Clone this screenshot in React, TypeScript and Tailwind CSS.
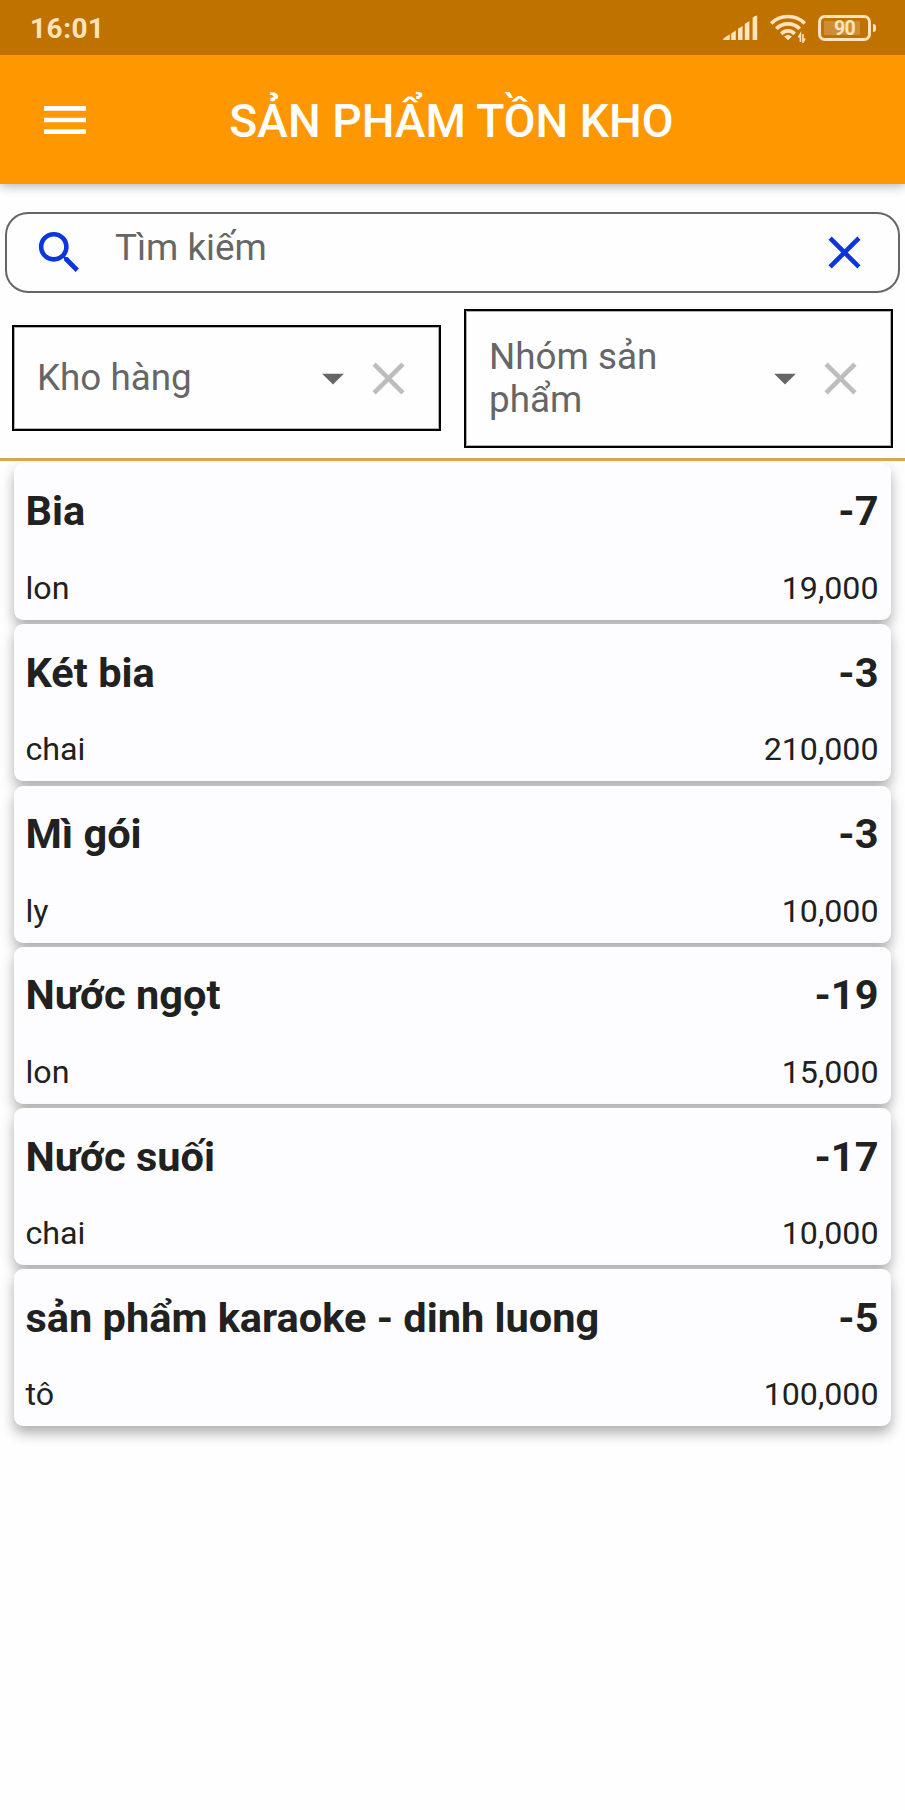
import { MdArrowDropDown, MdClose, MdMenu, MdSearch } from "react-icons/md";

type Product = { name: string; quantity: string; unit: string; price: string };

const products: Product[] = [
  { name: "Bia", quantity: "-7", unit: "lon", price: "19,000" },
  { name: "Két bia", quantity: "-3", unit: "chai", price: "210,000" },
  { name: "Mì gói", quantity: "-3", unit: "ly", price: "10,000" },
  { name: "Nước ngọt", quantity: "-19", unit: "lon", price: "15,000" },
  { name: "Nước suối", quantity: "-17", unit: "chai", price: "10,000" },
  { name: "sản phẩm karaoke - dinh luong", quantity: "-5", unit: "tô", price: "100,000" },
];

function SignalIcon() {
  return (
    <svg width="35" height="26" viewBox="0 0 35 26" fill="currentColor">
      <path d="M0 25 Q0 22.5 6.8 19.5 V25Z M8.2 18.6 L12.8 15.5 V25 H8.2Z M15 13.8 L19.6 11 V25 H15Z M21.8 9 L26.4 6 V25 H21.8Z M29.6 2.7 Q31 1 34.2 .5 V25 H29.6Z" />
    </svg>
  );
}

function WifiIcon() {
  return (
    <svg width="36" height="30" viewBox="0 0 36 30" fill="none" stroke="currentColor" strokeWidth="3.7">
      <path d="M1.2 10.4 C10.5 1.2 25.5 1.2 34.8 10.4" />
      <path d="M6.3 15.8 C12.8 9.2 23.2 9.2 29.7 15.8" />
      <path d="M11.3 20.8 C15.2 17 20.8 17 24.7 20.8" />
      <path d="M18 27.3 L14 23.6 Q18 20.6 22 23.6Z" fill="currentColor" stroke="none" />
      <path d="M30.4 29 V21 L28.4 24.5 M33 21 V29 L35 25.5" strokeWidth="1.6" />
    </svg>
  );
}

function Battery() {
  return (
    <div className="flex items-center gap-[2px]">
      <div className="flex h-[26px] w-[53px] rounded-[7px] border-[3px] border-[#ffe3bd] p-[3px]">
        <div className="flex h-full w-full items-center justify-center bg-[linear-gradient(90deg,#cf8c35_88%,transparent_88%)] pt-[2px] text-[19.5px] leading-none font-bold tracking-[-0.6px]">
          90
        </div>
      </div>
      <div className="h-[8px] w-[3px] rounded-r-full bg-[#ffe3bd]" />
    </div>
  );
}

function Select({ label, tall }: { label: string; tall?: boolean }) {
  return (
    <div
      className={
        "flex w-[429px] items-center justify-between border-2 border-black pr-[23.5px] pl-[23px] shadow-[inset_0_0_0_1px_rgba(0,0,0,0.3)] " +
        (tall ? "h-[139px]" : "h-[106px]")
      }
    >
      <span className="w-[230px] text-[36.8px] leading-[43.5px] text-[#666]">{label}</span>
      <div className="flex items-center gap-[2px]">
        <MdArrowDropDown className="h-[52px] w-[52px] text-[#666]" />
        <MdClose className="h-[55px] w-[55px] text-[#bdbdbd]" />
      </div>
    </div>
  );
}

function ProductCard({ product }: { product: Product }) {
  return (
    <li className="flex h-[157px] flex-col justify-between rounded-[9px] bg-[#fdfdff] pt-[23.4px] pr-[12.5px] pb-[12.1px] pl-[12px] text-[#212121] shadow-[0_7px_13px_rgba(0,0,0,0.32)]">
      <div className="flex justify-between text-[41.5px] leading-[50px] font-bold">
        <span className="-ml-[0.5px]">{product.name}</span>
        <span>{product.quantity}</span>
      </div>
      <div className="flex justify-between text-[32.2px] leading-[40px]">
        <span className="-ml-[0.5px]">{product.unit}</span>
        <span>{product.price}</span>
      </div>
    </li>
  );
}

export default function App() {
  return (
    <div className="flex h-[1810px] w-[905px] flex-col overflow-hidden bg-[#fefefe] font-[Roboto,sans-serif]">
      <div className="z-20 flex h-[55px] shrink-0 items-center justify-between bg-[#bf7200] pr-[29px] pl-[30px] text-[#ffe3bd]">
        <span className="mt-[2px] text-[28px] leading-none font-bold tracking-[0.5px]">16:01</span>
        <div className="flex items-center gap-[12px]">
          <SignalIcon />
          <WifiIcon />
          <Battery />
        </div>
      </div>
      <header className="z-10 grid h-[129px] shrink-0 grid-cols-[130px_1fr_132px] items-center bg-[#ff9800] text-white shadow-[0_2px_10px_rgba(0,0,0,0.3)]">
        <MdMenu className="ml-[37px] h-[56px] w-[56px]" />
        <h1 className="mt-[2px] text-center text-[46.2px] leading-[56px] font-medium whitespace-nowrap">SẢN PHẨM TỒN KHO</h1>
      </header>
      <div className="mx-[5px] mt-[28px] flex h-[81px] shrink-0 items-center rounded-[23px] border-2 border-[#666] pr-[26px] pl-[25px]">
        <MdSearch className="h-[55px] w-[55px] text-[#0a36dc]" />
        <span className="mb-[10px] ml-[28px] grow text-[36.8px] leading-[43px] text-[#666]">Tìm kiếm</span>
        <MdClose className="h-[55px] w-[55px] text-[#0a36dc]" />
      </div>
      <div className="mt-[15.5px] flex h-[139px] shrink-0 items-center justify-between px-[12px]">
        <Select label="Kho hàng" />
        <Select label="Nhóm sản phẩm" tall />
      </div>
      <div className="mt-[10.5px] h-[3px] shrink-0 bg-[#dba44f]" />
      <ul className="flex grow flex-col gap-[4.3px] overflow-hidden px-[14px] pt-[2px]">
        {products.map((product) => (
          <ProductCard key={product.name} product={product} />
        ))}
      </ul>
    </div>
  );
}
